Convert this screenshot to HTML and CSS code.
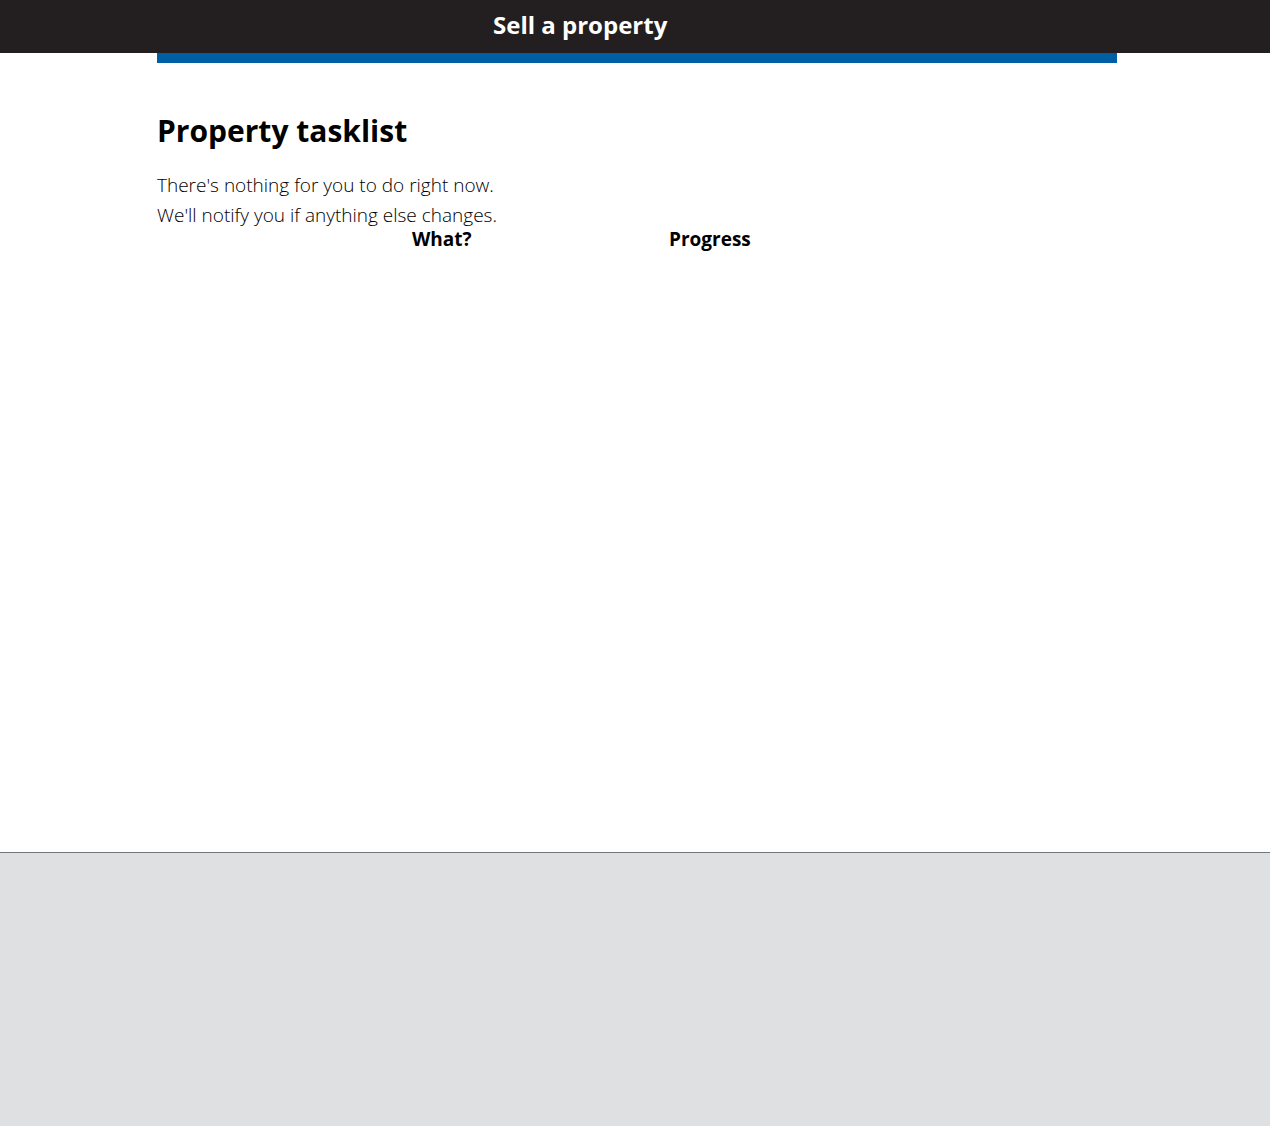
FILE: index.html
```html
<!DOCTYPE html>
<html lang="en">
<head>
<meta charset="utf-8">
<title>Property tasklist</title>
<link rel="stylesheet" href="styles.css">
</head>
<body>
<header class="site-header">
  <div class="header-inner">
    <span class="service-name">Sell a property</span>
  </div>
</header>
<div class="phase-bar"></div>
<main class="main">
  <h1 class="page-title">Property tasklist</h1>
  <p class="lead">There's nothing for you to do right now.</p>
  <p class="lead">We'll notify you if anything else changes.</p>
  <div class="task-table">
    <div class="cell"></div>
    <div class="cell th">What?</div>
    <div class="cell th">Progress</div>
  </div>
</main>
<footer class="site-footer"></footer>
</body>
</html>
```

FILE: styles.css
```css
html, body {
  margin: 0;
  padding: 0;
}
body {
  font-family: "Open Sans", "Noto Sans", sans-serif;
  color: #0b0c0c;
  background: #ffffff;
}
.site-header {
  background: #231f20;
  height: 53px;
}
.header-inner {
  width: 960px;
  margin-left: calc(50% - 478px);
  height: 53px;
  display: flex;
  align-items: center;
  padding-left: 336px;
  box-sizing: border-box;
}
.service-name {
  color: #ffffff;
  font-weight: 700;
  font-size: 24px;
  line-height: 30px;
  margin-top: -4px;
}
.phase-bar {
  width: 960px;
  height: 10px;
  margin-left: calc(50% - 478px);
  background: #005ea5;
}
.main {
  width: 960px;
  margin-left: calc(50% - 478px);
  min-height: 789px;
  box-sizing: border-box;
  padding-top: 48px;
}
.page-title {
  margin: 0 0 19px;
  font-size: 30px;
  line-height: 40px;
  font-weight: 700;
  color: #000000;
}
.lead {
  margin: 0;
  font-size: 19px;
  line-height: 30px;
  font-weight: 300;
  color: #000000;
}
.task-table {
  display: grid;
  grid-template-columns: 255px 257px 1fr;
}
.th {
  font-weight: 700;
  font-size: 19px;
  line-height: 18px;
  color: #000000;
}
.site-footer {
  border-top: 1px solid #6f777b;
  background: #dfe0e2;
  height: 273px;
}
```
